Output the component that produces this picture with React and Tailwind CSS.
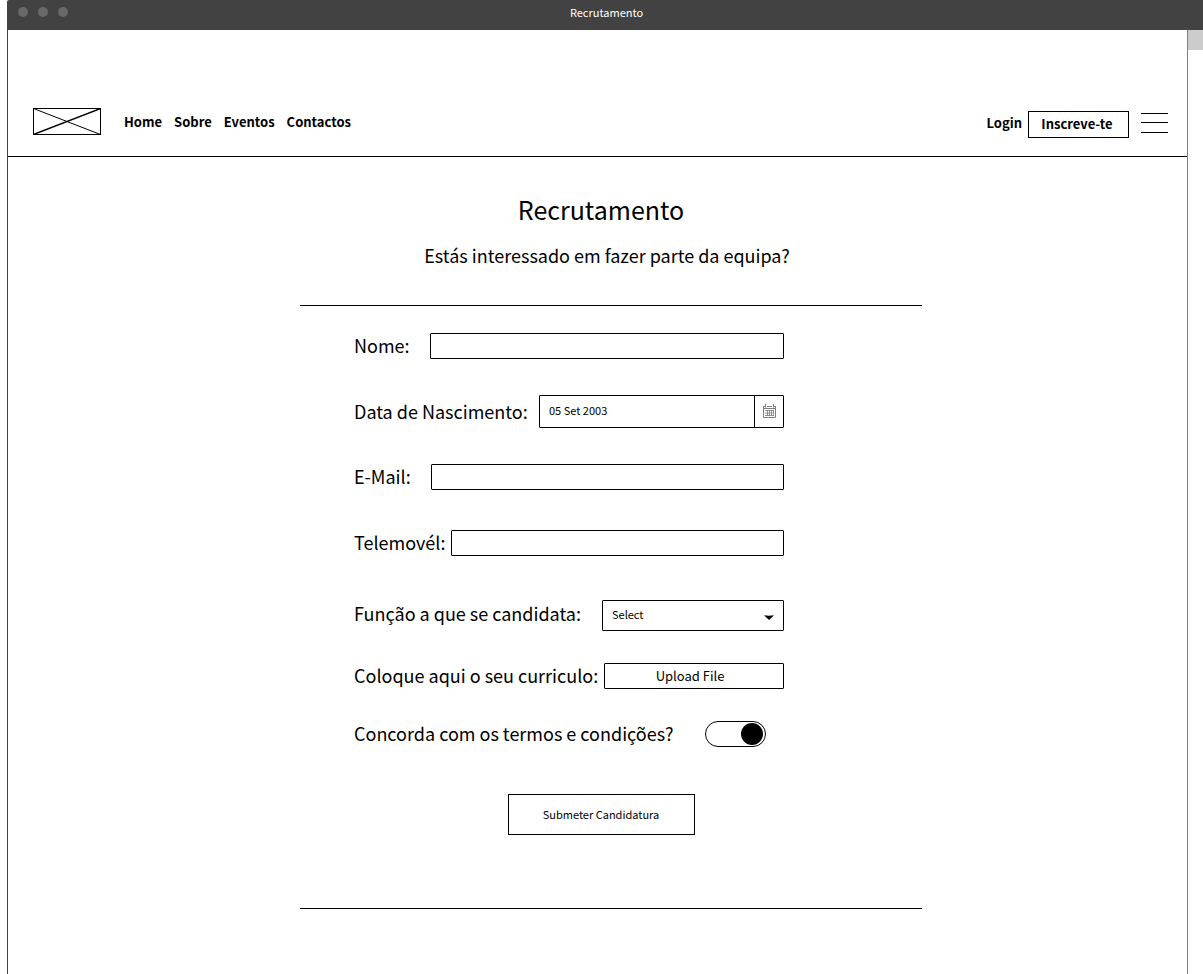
const navLinks = ['Home', 'Sobre', 'Eventos', 'Contactos'];

function TitleBar() {
  return (
    <div className="relative flex h-[30px] items-center justify-center rounded-tl-[2px] bg-[#424242]">
      <div className="absolute top-[7px] left-[11px] flex gap-[10px]">
        <span className="size-[10px] rounded-full bg-[#696969]" />
        <span className="size-[10px] rounded-full bg-[#696969]" />
        <span className="size-[10px] rounded-full bg-[#696969]" />
      </div>
      <p className="pb-1.5 pl-[3px] text-[11px] leading-4 text-white">Recrutamento</p>
    </div>
  );
}

function Header() {
  return (
    <header className="flex items-start justify-between border-b border-black pt-[78px] pr-[19px] pb-[18px] pl-[25px]">
      <div className="flex items-center gap-[23px]">
        <svg width="68" height="27" viewBox="0 0 68 27" fill="none" stroke="#000" aria-hidden="true">
          <rect x="0.5" y="0.5" width="67" height="26" />
          <path d="M0.5 0.5L67.5 26.5" />
          <path d="M0.5 26.5L67.5 0.5" strokeWidth="1.4" />
        </svg>
        <nav className="flex gap-3 text-[13px] leading-5 font-bold">
          {navLinks.map((name) => (
            <a key={name} href="#">
              {name}
            </a>
          ))}
        </nav>
      </div>
      <div className="flex items-start pt-[3px] text-[13px] leading-5 font-bold">
        <a href="#" className="pt-0.5">Login</a>
        <button type="button" className="ml-[6px] h-[27px] w-[101px] border border-black pr-[3px] pb-0.5">
          Inscreve-te
        </button>
        <button type="button" aria-label="Menu" className="ml-3 pt-0.5">
          <svg width="27" height="20" viewBox="0 0 27 20" stroke="#000" className="block">
            <path d="M0 0.5H27M0 9.5H27M0 19.5H27" />
          </svg>
        </button>
      </div>
    </header>
  );
}

function CalendarIcon() {
  return (
    <svg width="13" height="14" viewBox="0 0 13 14" fill="none" stroke="#808080" aria-hidden="true">
      <path d="M0.5 2V13.5H12.5V2M0 2.5H2M4 2.5H9M11 2.5H13M0.5 4.5H12.5M2.5 0V3.5M10.5 0V3.5" />
      <path d="M2 6.5H11M2 9H11M2 11.5H11M4.5 6V12M6.5 6V12M8.5 6V12M10.5 6V12" strokeWidth="0.8" />
    </svg>
  );
}

const fieldClass = 'h-[26px] min-w-0 flex-1 rounded-[1px] border border-black px-2 text-[13px]';

function ApplicationForm() {
  return (
    <form className="border-y border-black pt-[27px] pb-[73px]">
      <div className="pr-[138px] pl-[54px] text-[18px] leading-6">
        <div className="flex items-center">
          <label htmlFor="nome" className="w-[76px] pb-0.5">Nome:</label>
          <input id="nome" type="text" className={fieldClass} />
        </div>
        <div className="mt-9 flex items-center">
          <label htmlFor="nascimento" className="w-[185px] pb-0.5">Data de Nascimento:</label>
          <div className="flex h-[33px] min-w-0 flex-1 rounded-[1px] border border-black">
            <input id="nascimento" type="text" defaultValue="05 Set 2003" className="min-w-0 flex-1 px-[9px] pb-1 text-[11px]" />
            <button type="button" aria-label="Abrir calendário" className="flex w-[29px] items-center justify-center border-l border-black pb-0.5">
              <CalendarIcon />
            </button>
          </div>
        </div>
        <div className="mt-9 flex items-center">
          <label htmlFor="email" className="w-[77px] pb-0.5">E-Mail:</label>
          <input id="email" type="email" className={fieldClass} />
        </div>
        <div className="mt-10 flex items-center">
          <label htmlFor="telefone" className="w-[97px] pb-0.5">Telemovél:</label>
          <input id="telefone" type="tel" className={fieldClass} />
        </div>
        <div className="mt-11 flex items-center">
          <label htmlFor="funcao" className="w-[248px] pb-1.5">Função a que se candidata:</label>
          <div className="relative min-w-0 flex-1">
            <select id="funcao" className="block h-[31px] w-full appearance-none rounded-[1px] border border-black px-[9px] pb-1 text-[11px]">
              <option>Select</option>
            </select>
            <svg width="10" height="5" viewBox="0 0 10 5" className="pointer-events-none absolute top-[15px] right-[10px]" aria-hidden="true">
              <path d="M0 0.3Q5 1 10 0.3L5 5Z" fill="#000" />
            </svg>
          </div>
        </div>
        <div className="mt-8 flex items-center">
          <label htmlFor="curriculo" className="w-[250px] pb-0.5">Coloque aqui o seu curriculo:</label>
          <button id="curriculo" type="button" className={`${fieldClass} pr-4`}>Upload File</button>
        </div>
        <div className="mt-8 flex items-center">
          <label htmlFor="termos" className="w-[351px] pb-0.5">Concorda com os termos e condições?</label>
          <input
            id="termos"
            type="checkbox"
            role="switch"
            defaultChecked
            className="flex h-[26px] w-[61px] appearance-none items-center rounded-full border border-black px-[2px] before:size-[22px] before:rounded-full before:bg-black checked:justify-end"
          />
        </div>
      </div>
      <div className="mt-[47px] flex justify-center pr-5">
        <button type="submit" className="h-[41px] w-[187px] border border-black text-[11px]">
          Submeter Candidatura
        </button>
      </div>
    </form>
  );
}

export default function App() {
  return (
    <div className="flex min-h-screen flex-col bg-white pl-[7px] font-['Noto_Sans_CJK_JP','Noto_Sans',sans-serif] text-black">
      <TitleBar />
      <div className="flex flex-1 border-l border-[#424242]">
        <div className="min-w-0 flex-1">
          <Header />
          <main className="pl-[27px]">
            <div className="mx-auto max-w-[622px]">
              <h1 className="mt-8 pr-5 text-center text-[25px] leading-10">Recrutamento</h1>
              <p className="mt-3 mb-9 pr-2 text-center text-[18px] leading-7">
                Estás interessado em fazer parte da equipa?
              </p>
              <ApplicationForm />
            </div>
          </main>
        </div>
        <div className="w-4 border-l border-[#808080]">
          <div className="h-5 bg-[#cccccc]" />
        </div>
      </div>
    </div>
  );
}
